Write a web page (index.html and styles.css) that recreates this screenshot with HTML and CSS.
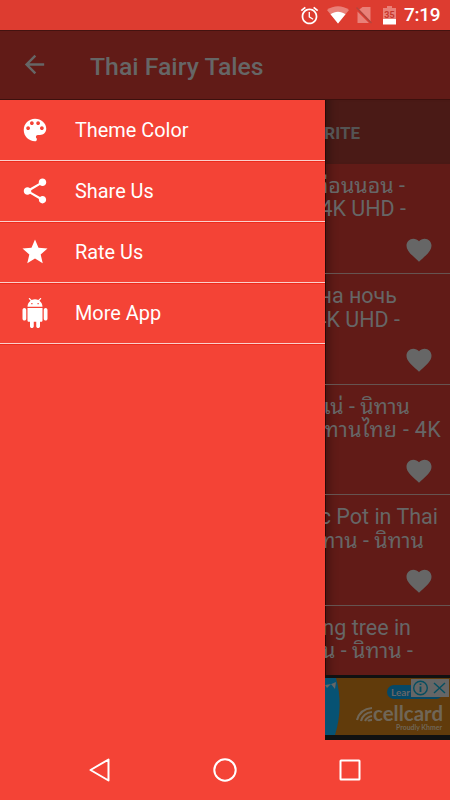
FILE: index.html
```
<!DOCTYPE html>
<html lang="en">
<head>
    <meta charset="UTF-8">
    <meta name="viewport" content="width=device-width, initial-scale=1.0">
    <title>Thai Fairy Tales</title>
    <link rel="stylesheet" href="styles.css">
</head>
<body>
    <svg width="0" height="0" class="defs">
        <symbol id="heart" viewBox="0 0 24 24">
            <path d="M12 21.35l-1.45-1.32C5.4 15.36 2 12.28 2 8.5 2 5.42 4.42 3 7.5 3c1.74 0 3.41.81 4.5 2.09C13.09 3.81 14.76 3 16.5 3 19.58 3 22 5.42 22 8.5c0 3.78-3.4 6.86-8.55 11.54L12 21.35z"/>
        </symbol>
    </svg>

    <div class="status-bar">
        <svg class="alarm" viewBox="0 0 24 24"><path d="M22 5.72l-4.6-3.86-1.29 1.53 4.6 3.86L22 5.72zM7.88 3.39L6.6 1.86 2 5.71l1.29 1.53 4.59-3.85zM12.5 8H11v6l4.75 2.85.75-1.23-4-2.37V8zM12 4c-4.97 0-9 4.03-9 9s4.02 9 9 9c4.97 0 9-4.03 9-9s-4.03-9-9-9zm0 16c-3.87 0-7-3.13-7-7s3.13-7 7-7 7 3.13 7 7-3.13 7-7 7z"/></svg>
        <svg class="wifi" viewBox="0 0 22 18"><path opacity=".35" d="M11 17.500L0 4C6.500-1 15.500-1 22 4z"/><path d="M11 17.500L3.500 8.300c4.500-3.400 10.500-3.400 15 0z"/></svg>
        <svg class="sim" viewBox="0 0 16 18"><path opacity=".35" d="M6.500 1H14.500v14.500L3 3.800zM1.500 5.500V17h11.500z"/><path d="M.5 1.500L15.500 17" stroke="#b2453d" stroke-width="1.400"/></svg>
        <svg class="battery" viewBox="0 0 13 19"><path opacity=".35" d="M4 0h5v2h4v11H0V2h4z"/><path d="M0 13h13v5.500H0z"/><text x="6.500" y="11.800" text-anchor="middle">35</text></svg>
        <span class="clock">7:19</span>
    </div>

    <header class="toolbar">
        <svg class="back" viewBox="0 0 24 24"><path d="M20 11H7.830l5.590-5.590L12 4l-8 8 8 8 1.410-1.410L7.830 13H20v-2z"/></svg>
        <h1>Thai Fairy Tales</h1>
    </header>

    <main class="screen">
        <nav class="drawer">
            <a class="menu-item">
                <svg viewBox="0 0 24 24"><path d="M12 3c-4.970 0-9 4.030-9 9s4.030 9 9 9c.83 0 1.500-.67 1.500-1.500 0-.39-.15-.74-.39-1.010-.23-.26-.38-.61-.38-.99 0-.83.67-1.500 1.500-1.500H16c2.760 0 5-2.240 5-5 0-4.420-4.030-8-9-8zm-5.500 9c-.83 0-1.500-.67-1.500-1.500S5.670 9 6.500 9 8 9.670 8 10.500 7.330 12 6.500 12zm3-4C8.670 8 8 7.330 8 6.500S8.670 5 9.500 5s1.500.67 1.500 1.500S10.330 8 9.500 8zm5 0c-.83 0-1.500-.67-1.500-1.500S13.670 5 14.500 5s1.500.67 1.500 1.500S15.330 8 14.500 8zm3 4c-.83 0-1.500-.67-1.500-1.500S16.670 9 17.500 9s1.500.67 1.500 1.500-.67 1.500-1.500 1.500z"/></svg>
                <span>Theme Color</span>
            </a>
            <a class="menu-item">
                <svg viewBox="0 0 24 24"><path d="M18 16.080c-.76 0-1.440.3-1.960.77L8.910 12.700c.05-.23.09-.46.09-.7s-.04-.47-.09-.7l7.050-4.110c.54.5 1.250.81 2.040.81 1.660 0 3-1.340 3-3s-1.340-3-3-3-3 1.340-3 3c0 .24.04.47.09.7L8.040 9.810C7.500 9.310 6.790 9 6 9c-1.660 0-3 1.340-3 3s1.340 3 3 3c.79 0 1.500-.31 2.040-.81l7.120 4.160c-.05.21-.08.43-.08.65 0 1.610 1.310 2.920 2.920 2.920s2.920-1.310 2.920-2.920-1.310-2.920-2.920-2.920z"/></svg>
                <span>Share Us</span>
            </a>
            <a class="menu-item">
                <svg viewBox="0 0 24 24"><path d="M12 17.270L18.180 21l-1.640-7.030L22 9.240l-7.190-.61L12 2 9.190 8.630 2 9.240l5.460 4.730L5.820 21z"/></svg>
                <span>Rate Us</span>
            </a>
            <a class="menu-item">
                <svg viewBox="0 0 24 24"><path d="M6 18c0 .55.45 1 1 1h1v3.500c0 .83.67 1.500 1.500 1.500s1.500-.67 1.500-1.500V19h2v3.500c0 .83.67 1.500 1.500 1.500s1.500-.67 1.500-1.500V19h1c.55 0 1-.45 1-1V8H6v10zM3.500 8C2.670 8 2 8.670 2 9.500v7c0 .83.67 1.500 1.500 1.500S5 17.330 5 16.500v-7C5 8.670 4.330 8 3.500 8zm17 0c-.83 0-1.500.67-1.500 1.500v7c0 .83.67 1.500 1.500 1.500s1.500-.67 1.500-1.500v-7c0-.83-.67-1.500-1.500-1.500zm-4.970-5.840l1.300-1.300c.2-.2.2-.51 0-.71-.2-.2-.51-.2-.71 0l-1.480 1.480C13.850 1.230 12.950 1 12 1c-.96 0-1.860.23-2.660.63L7.850.15c-.2-.2-.51-.2-.71 0-.2.2-.2.51 0 .71l1.310 1.310C6.970 3.260 6 5.010 6 7h12c0-1.990-.97-3.750-2.470-4.840zM10 5H9V4h1v1zm5 0h-1V4h1v1z"/></svg>
                <span>More App</span>
            </a>
        </nav>

        <section class="content">
            <div class="tab"><span>RITE</span></div>
            <div class="list">
                <div class="story">
                    <p class="end-45">ก่อนนอน -</p>
                    <p class="end-44">4K UHD -</p>
                    <svg class="fav"><use href="#heart"/></svg>
                </div>
                <div class="story">
                    <p class="end-53">на ночь</p>
                    <p class="end-50">4K UHD -</p>
                    <svg class="fav"><use href="#heart"/></svg>
                </div>
                <div class="story">
                    <p class="end-40">แน่ - นิทาน</p>
                    <p class="end-9 thai">ทานไทย - 4K</p>
                    <svg class="fav"><use href="#heart"/></svg>
                </div>
                <div class="story">
                    <p class="end-12">c Pot in Thai</p>
                    <p class="end-26">ทาน - นิทาน</p>
                    <svg class="fav"><use href="#heart"/></svg>
                </div>
                <div class="story">
                    <p class="end-39">ng tree in</p>
                    <p class="end-37">น - นิทาน -</p>
                </div>
            </div>
            <div class="ad">
                <svg viewBox="0 0 125 57">
                    <path d="M0 0h11c5 17 5 38-1 57H0z" fill="#075273"/>
                    <path d="M0 7Q6 7 11 4l-1 7-4-5-4 4-2-3z" fill="#666"/>
                    <rect x="62" y="7" width="56" height="14" rx="7" fill="#064866"/>
                    <text class="learn" x="66" y="18">Lear</text>
                    <g fill="none" stroke="#706657" stroke-width="2.200">
                        <path d="M32 42q3-11 15-12"/>
                        <path d="M36 43q2-8 11-9"/>
                        <path d="M40 43q2-4 7-5"/>
                        <path d="M43 43q1-1 4-1"/>
                    </g>
                    <text class="brand" x="48" y="43" textLength="70" lengthAdjust="spacingAndGlyphs">cellcard</text>
                    <text class="slogan" x="71" y="51.500" textLength="46" lengthAdjust="spacingAndGlyphs">Proudly Khmer</text>
                    <path d="M86 1h38v18H86z" fill="#666"/>
                    <g fill="none" stroke="#064e60" stroke-width="1.400">
                        <circle cx="95.500" cy="10" r="6.800"/>
                        <path d="M109 5l11 10M120 5l-11 10"/>
                        <path d="M95.500 8.500v5.500M95.500 5.500v1.600" stroke-width="1.800"/>
                    </g>
                </svg>
            </div>
        </section>
    </main>

    <footer class="nav-bar">
        <svg viewBox="0 0 26 26"><path d="M21.500 2.500v21L3.500 13z"/></svg>
        <svg viewBox="0 0 26 26"><circle cx="13" cy="13" r="10.700"/></svg>
        <svg viewBox="0 0 26 26"><rect x="3.500" y="3.500" width="19" height="19" rx=".5"/></svg>
    </footer>
</body>
</html>
```
FILE: styles.css
```
* {
    margin: 0;
    padding: 0;
    box-sizing: border-box;
}

body {
    width: 450px;
    height: 800px;
    overflow: hidden;
    display: flex;
    flex-direction: column;
    background-color: #f44336;
    color: white;
    font-family: Roboto, "Noto Sans Thai Looped", Loma, Waree, Garuda, "Noto Serif Thai", sans-serif;
}

.defs {
    position: absolute;
}

/* Status bar */
.status-bar {
    height: 30px;
    flex: none;
    display: flex;
    align-items: center;
    justify-content: flex-end;
    padding-right: 10px;
    background-color: #dd3c30;
    fill: white;
}

.alarm {
    width: 21px;
    height: 21px;
    margin-right: 7px;
}

.wifi {
    width: 22px;
    height: 18px;
    margin-right: 7px;
}

.sim {
    width: 16px;
    height: 18px;
    margin-right: 11px;
}

.battery {
    width: 13px;
    height: 19px;
    margin-right: 8px;
}

.battery text {
    font-size: 9px;
    font-weight: bold;
    fill: #c8372d;
}

.clock {
    width: 36px;
    font-size: 19px;
    font-weight: 500;
    letter-spacing: -0.3px;
    line-height: 32px;
}

/* Toolbar */
.toolbar {
    height: 70px;
    flex: none;
    display: flex;
    align-items: center;
    padding: 1px 0 0 20px;
    background-color: #611b17;
    border-top: 1px solid #431310;
    border-bottom: 1px solid #3c100d;
    color: #666;
    fill: #666;
}

.back {
    width: 29px;
    height: 29px;
    margin: -2px 41px 0 0;
}

.toolbar h1 {
    padding-top: 1px;
    font-size: 24.8px;
    font-weight: 500;
}

/* Drawer */
.screen {
    height: 640px;
    flex: none;
    display: flex;
}

.drawer {
    width: 325px;
    flex: none;
    background-color: #f44336;
}

.menu-item {
    height: 61px;
    display: flex;
    align-items: center;
    padding-left: 20px;
    border-bottom: 1px solid #fbd0cc;
    box-shadow: 0 1px 0 #ec2a1c;
    font-size: 19.9px;
}

.menu-item svg {
    width: 30px;
    height: 30px;
    margin-right: 25px;
    fill: white;
}

.menu-item span {
    padding-top: 2px;
    line-height: 24px;
}

/* Dimmed content */
.content {
    width: 125px;
    display: flex;
    flex-direction: column;
    overflow: hidden;
    background-color: #611b17;
    color: #666;
    box-shadow: inset 1px 0 0 #260a08, inset 12px 0 10px -8px rgba(0, 0, 0, 0.3);
}

.tab {
    height: 64px;
    flex: none;
    display: flex;
    align-items: center;
    justify-content: flex-end;
    padding: 2px 90px 0 0;
    background-color: #4a1a16;
    box-shadow: inset 1px 0 0 #260a08, inset 12px 0 10px -8px rgba(0, 0, 0, 0.3);
    color: #545454;
    font-size: 17px;
    font-weight: bold;
}

.list {
    height: 511px;
    flex: none;
    overflow: hidden;
}

.story {
    height: 110.4px;
    padding-top: 10px;
    border-bottom: 1px solid #665451;
    display: flex;
    flex-direction: column;
    align-items: flex-end;
}

.story p {
    height: 23.4px;
    line-height: 23.4px;
    font-size: 21.5px;
    white-space: nowrap;
}

.story .thai {
    letter-spacing: 0.3px;
}

.end-9 { margin-right: 9px; }
.end-12 { margin-right: 12px; }
.end-26 { margin-right: 26px; }
.end-37 { margin-right: 37px; }
.end-39 { margin-right: 39px; }
.end-40 { margin-right: 40px; }
.end-44 { margin-right: 44px; }
.end-45 { margin-right: 45px; }
.end-50 { margin-right: 50px; }
.end-53 { margin-right: 53px; }

.fav {
    width: 30px;
    height: 30px;
    margin: 14px 16px 0 0;
    fill: #666;
}

.ad {
    height: 65px;
    padding: 3px 0 5px;
    background-color: #111;
}

.ad svg {
    display: block;
    width: 125px;
    height: 57px;
    background-color: #613b0b;
}

.learn {
    font: bold 10px Lato, sans-serif;
    fill: #666;
}

.brand {
    font: bold 20px Lato, sans-serif;
    fill: #706657;
}

.slogan {
    font: bold 6.5px Lato, sans-serif;
    fill: #706657;
}

/* Navigation bar */
.nav-bar {
    height: 60px;
    display: flex;
    align-items: center;
    justify-content: space-between;
    padding: 0 87px;
}

.nav-bar svg {
    width: 26px;
    height: 26px;
    fill: none;
    stroke: white;
    stroke-width: 2;
    stroke-linejoin: round;
}
```
